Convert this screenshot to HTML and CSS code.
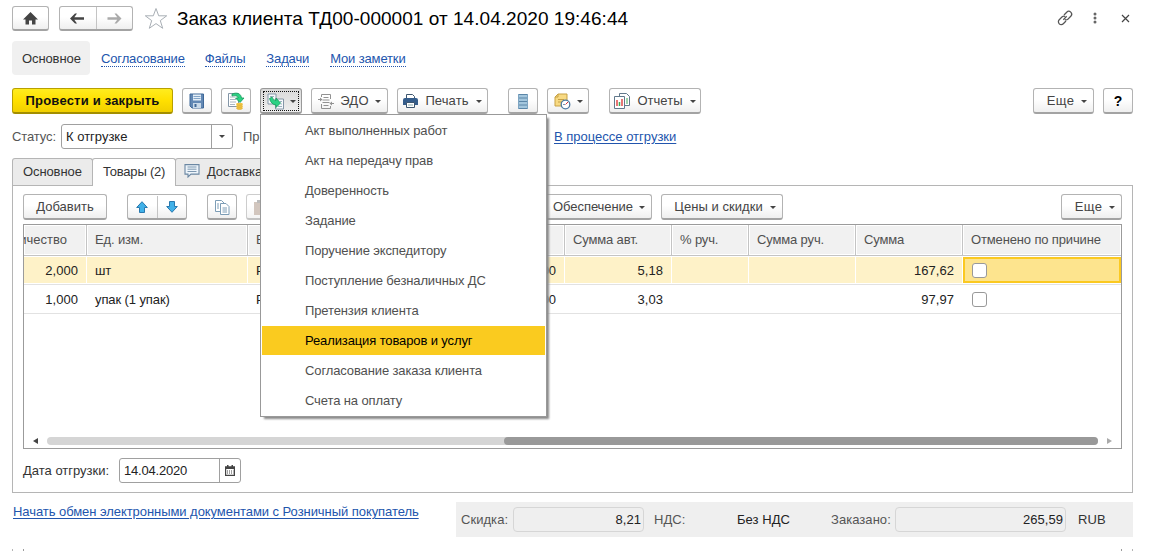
FILE: index.html
```html
<!DOCTYPE html>
<html lang="ru">
<head>
<meta charset="utf-8">
<title>Заказ клиента</title>
<link rel="stylesheet" href="styles.css">
</head>
<body>
<div class="window">
  <header class="titlebar">
    <button class="btn home"><svg width="15" height="13" viewBox="0 0 15 13"><path d="M7.500 0 15 7.500h-2.500V12.500H9V8.500H6v4H2.500V7.500H0z" fill="#444"/></svg></button>
    <div class="btn-group nav">
      <button class="part"><svg width="15" height="11" viewBox="0 0 15 11"><path d="M5 .5 0 5.500l5 5h2L4.300 6.700H14V4.300H4.300L7 .5z" fill="#444"/></svg></button>
      <button class="part"><svg width="15" height="11" viewBox="0 0 15 11"><path d="M9.500.5l5 5-5 5h-2l2.700-3.800H.5V4.300h9.700L7.500.5z" fill="#aaa"/></svg></button>
    </div>
    <svg class="star" width="24" height="23" viewBox="0 0 24 23"><path d="M12 1.500l2.700 7.300h8l-6.400 4.800 2.400 7.700-6.700-4.700-6.700 4.700 2.400-7.700L1.300 8.800h8z" fill="#fff" stroke="#a9afb5"/></svg>
    <h1 class="title">Заказ клиента ТД00-000001 от 14.04.2020 19:46:44</h1>
    <div class="window-tools">
      <svg width="16" height="16" viewBox="0 0 16 16" fill="none" stroke="#555" stroke-width="1.250"><path d="M7 5 9.700 2.200a2.800 2.800 0 0 1 4.100 4L10.800 9.200Q9.300 10.400 7.800 9.400"/><path d="M9 11 6.300 13.800a2.800 2.800 0 0 1-4.100-4L5.200 6.800Q6.700 5.600 8.200 6.600"/><path d="M6.300 9.700l3.400-3.400"/></svg>
      <svg width="4" height="12" viewBox="0 0 4 12" fill="#666"><circle cx="2" cy="2" r="1.500"/><circle cx="2" cy="6" r="1.500"/><circle cx="2" cy="10" r="1.500"/></svg>
      <svg class="close" width="9" height="9" viewBox="0 0 9 9" stroke="#444" stroke-width="1.200"><path d="M1 1l7 7M8 1 1 8"/></svg>
    </div>
  </header>

  <nav class="sections">
    <span class="section-active">Основное</span>
    <a class="s1">Согласование</a><a class="s2">Файлы</a><a class="s3">Задачи</a><a class="s4">Мои заметки</a>
  </nav>

  <div class="commands">
    <button class="btn primary">Провести и закрыть</button>
    <button class="btn icon"><svg width="16" height="16" viewBox="0 0 16 16"><path d="M1 1h13.500v14H3l-2-2z" fill="#6288b4" stroke="#3f6898"/><path d="M4 1.500h8v6H4z" fill="#e4eef7"/><path d="M4.500 3.500h7M4.500 5.500h7" stroke="#83a5c8"/><path d="M4 10h8v5H4z" fill="#c9d9e8"/><path d="M5.500 11h2v3h-2z" fill="#3f6898"/></svg></button>
    <button class="btn icon"><svg width="18" height="18" viewBox="0 0 18 18"><path d="M1.500 1.500h10v13h-10z" fill="#fff" stroke="#8496a7"/><path d="M3 5h5M3 7.500h6M3 10h6M3 12.500h5" stroke="#aab6c2"/><path d="M5 2c5-2 9-.5 9.500 4H17l-4 4.500L8.500 6h2.700C11 4 8 3 5 4z" fill="#2bd184" stroke="#169a5a" stroke-width=".8"/><path d="M9.500 11v5.500c1 1.300 5 1.300 6 0V11z" fill="#f3c545"/><path d="M9.500 12.500c1 1 5 1 6 0m-6 2c1 1 5 1 6 0m-6 2c1 1 5 1 6 0" stroke="#dcae34" fill="none" stroke-width=".8"/></svg></button>
    <div class="dropdown-anchor">
      <button class="btn pressed"><svg width="18" height="17" viewBox="0 0 18 17"><path d="M1 1h8v10H1z" fill="#f7fafc" stroke="#8496a7"/><path d="M8.500 6h8v10h-8z" fill="#f7fafc" stroke="#8496a7"/><path d="M3 3.500h4M13 8.500h2M13.500 11H15M11 13.500h4" stroke="#9cafbf"/><path d="M2.500 5.500 5 4q1 3.500 4 3.500V5l4.500 5L9 14.500V12Q4 11.500 2.500 5.500z" fill="#2bd184" stroke="#169a5a" stroke-width=".8"/></svg><i class="caret"></i></button>
      <ul class="menu">
        <li>Акт выполненных работ</li>
        <li>Акт на передачу прав</li>
        <li>Доверенность</li>
        <li>Задание</li>
        <li>Поручение экспедитору</li>
        <li>Поступление безналичных ДС</li>
        <li>Претензия клиента</li>
        <li class="current">Реализация товаров и услуг</li>
        <li>Согласование заказа клиента</li>
        <li>Счета на оплату</li>
      </ul>
    </div>
    <button class="btn edo"><svg width="16" height="15" viewBox="0 0 16 15" fill="none" stroke="#929292"><path d="M3.500 3V.5h9V5M3.500 10v4.500h9V12M5.500 3.500h5M4.500 6h7M4.500 8.500h7M5.500 11.500h5"/><path d="M0 5.500h2M16 9.500h-2"/><path d="M2 3.500v4l2.500-2zM14 7.500v4l-2.500-2z" fill="#929292" stroke="none"/></svg><span>ЭДО</span><i class="caret"></i></button>
    <button class="btn print"><svg width="15" height="14" viewBox="0 0 15 14"><path d="M3.500 5V.5h6l2 2V5" fill="#fff" stroke="#3d566f"/><path d="M0 6q0-2 2-2h11q2 0 2 2v5h-3V9H3v2H0z" fill="#355d8b"/><path d="M3.500 8.500h8v5h-8z" fill="#fff" stroke="#3d566f"/><path d="M5 11h5" stroke="#8aa"/></svg><span>Печать</span><i class="caret"></i></button>
    <button class="btn icon list"><svg width="10" height="15" viewBox="0 0 10 15"><path d="M0 0h10v15H0z" fill="#a3c6dd"/><path d="M0 .5h10M0 4h10M0 7.500h10M0 11h10M0 14.500h10" stroke="#5b86a8"/><path d="M.5 0v15M9.500 0v15" stroke="#7ea5c2"/></svg></button>
    <button class="btn sched"><svg width="17" height="17" viewBox="0 0 17 17"><path d="M4 1h9v12H1V4z" fill="#f8da83" stroke="#c7a145"/><path d="M1 4h3V1M4 6.500h6M4 9h4" fill="none" stroke="#c7a145"/><circle cx="11.500" cy="11.500" r="4.300" fill="#fff" stroke="#4f7aa2" stroke-width="1.300"/><path d="M11.500 11.500 14 9" stroke="#d33"/><path d="M9 11.500h2" stroke="#7899b3"/></svg><i class="caret"></i></button>
    <button class="btn reports"><svg width="16" height="16" viewBox="0 0 16 16"><path d="M5.500.5h7l3 3v9h-10z" fill="#fff" stroke="#62798c"/><path d="M.5 3.500h10v12H.5z" fill="#fff" stroke="#62798c"/><path d="M3 7v6" stroke="#e04848" stroke-width="1.500"/><path d="M5.500 9v4" stroke="#3baa54" stroke-width="1.500"/><path d="M8 6v7" stroke="#e04848" stroke-width="1.500"/><path d="M13 5v6" stroke="#3baa54"/></svg><span>Отчеты</span><i class="caret"></i></button>
    <button class="btn more end"><span>Еще</span><i class="caret"></i></button>
    <button class="btn help">?</button>
  </div>

  <div class="status-row">
    <label class="status-label">Статус:</label>
    <div class="field status"><span>К отгрузке</span><b><i class="caret small"></i></b></div>
    <span class="priority">Пр</span>
    <a class="state-link">В процессе отгрузки</a>
  </div>

  <div class="tabs">
    <div class="tab t1">Основное</div>
    <div class="tab t2 selected">Товары (2)</div>
    <div class="tab t3"><svg width="16" height="14" viewBox="0 0 16 14"><path d="M1 .6h14v9.500H7L4 13v-2.900H1z" fill="#edf4fa" stroke="#6b87a3" stroke-width="1.100"/><path d="M3.500 3h9M3.500 5.200h9M3.500 7.500h9" stroke="#7c97b0"/></svg><span>Доставка</span></div>
  </div>

  <section class="panel">
    <div class="table-tools">
      <button class="btn add">Добавить</button>
      <div class="btn-group move">
        <button class="part"><svg width="12" height="12" viewBox="0 0 12 12"><path d="M6 .7l5.300 5.800H8.500v5h-5v-5H.7z" fill="#41b1e8" stroke="#2878ae"/></svg></button>
        <button class="part"><svg width="12" height="12" viewBox="0 0 12 12"><path d="M6 11.300.7 5.500h2.800v-5h5v5h2.800z" fill="#41b1e8" stroke="#2878ae"/></svg></button>
      </div>
      <button class="btn icon"><svg width="15" height="15" viewBox="0 0 15 15" fill="#fff" stroke="#7c9db6"><path d="M.5.5h6l3 3v8h-9z"/><path d="M5.500 3.500h5.500l3 3v8H5.500z"/><path d="M2 4h2M2 6h2M2 8h2M7.500 8h4.500M7.500 10h4.500M7.500 12h4.500"/></svg></button>
      <button class="btn icon paste"><svg width="15" height="15" viewBox="0 0 15 15"><path d="M0 2h12v13H0z" fill="#bba99c"/><path d="M3 0h6v3H3z" fill="#999"/><path d="M6 6h8v9H6z" fill="#eee"/></svg></button>
      <button class="btn supply"><span>Обеспечение</span><i class="caret"></i></button>
      <button class="btn prices"><span>Цены и скидки</span><i class="caret"></i></button>
      <button class="btn more end"><span>Еще</span><i class="caret"></i></button>
    </div>

    <div class="grid">
      <div class="row head">
        <div class="qty"><span>Количество</span></div><div>Ед. изм.</div><div>Вид цены</div><div>Сумма авт.</div><div>% руч.</div><div>Сумма руч.</div><div>Сумма</div><div>Отменено по причине</div>
      </div>
      <div class="row active">
        <div class="num">2,000</div><div>шт</div><div class="split"><span>Розничная</span><span>0,00</span></div><div class="num sum">5,18</div><div></div><div></div><div class="num">167,62</div><div class="focus"><i class="check"></i></div>
      </div>
      <div class="row">
        <div class="num">1,000</div><div>упак (1 упак)</div><div class="split"><span>Розничная</span><span>0,00</span></div><div class="num sum">3,03</div><div></div><div></div><div class="num">97,97</div><div class="mark"><i class="check"></i></div>
      </div>
      <div class="scroll">
        <svg width="5" height="8" viewBox="0 0 5 8"><path d="M5 1v6L0 4z" fill="#444"/></svg>
        <div class="track"><div class="thumb"></div></div>
        <svg width="5" height="8" viewBox="0 0 5 8"><path d="M0 1v6l5-3z" fill="#aaa"/></svg>
      </div>
    </div>

    <div class="date-row">
      <label>Дата отгрузки:</label>
      <div class="field date"><span>14.04.2020</span><b><svg width="10" height="11" viewBox="0 0 10 11"><path d="M.6 2h8.800v8.400H.6z" fill="#fff" stroke="#444" stroke-width="1.200"/><path d="M0 1.500h10V4H0zM2 0h1.500v2H2zM6.500 0H8v2H6.500z" fill="#444"/><path d="M2 6h6.500M2 8h6.500" stroke="#444" stroke-dasharray="1 1"/></svg></b></div>
    </div>
  </section>

  <footer class="footer">
    <a class="edi">Начать обмен электронными документами с Розничный покупатель</a>
    <div class="totals">
      <label class="l1">Скидка:</label><div class="ro r1">8,21</div>
      <label class="l2">НДС:</label><span class="novat">Без НДС</span>
      <label class="l3">Заказано:</label><div class="ro r2">265,59</div>
      <span class="cur">RUB</span>
    </div>
  </footer>
  <div class="next-edge"><div></div></div>
</div>
</body>
</html>
```
FILE: styles.css
```css
* { box-sizing: border-box; }
body { margin: 0; background: #fff; overflow: hidden; font: 13px/16px "Liberation Sans", Arial, sans-serif; color: #444; letter-spacing: -.1px; }
.window { width: 1152px; height: 551px; padding: 6px 19px 0 12px; overflow: hidden; }
button { font: inherit; letter-spacing: inherit; color: inherit; margin: 0; padding: 0; }
svg { display: block; flex: none; }
.btn, .btn-group { display: flex; align-items: center; justify-content: center; flex: none; height: 26px; border: 1px solid #b3b3b3; border-bottom: 2px solid #a3a3a3; border-radius: 3px; background: linear-gradient(#fff 45%, #efefef); }
.btn { padding-top: 1px; letter-spacing: 0; white-space: nowrap; }
.btn-group { align-items: stretch; }
.part { display: flex; flex: 1; align-items: center; justify-content: center; border: 0; background: none; }
.part + .part { border-left: 1px solid #c4c4c4; }
.caret { flex: none; width: 0; height: 0; margin-top: 1px; border: 3px solid transparent; border-top-color: #444; border-bottom: 0; }
.caret.small { border-width: 3px 3px 0; margin: 0; }
.end { margin-left: auto; }

.titlebar { display: flex; height: 25px; align-items: center; }
.home { width: 37px; height: 25px; padding: 0; }
.nav { width: 74px; height: 25px; margin-left: 10px; }
.star { margin-left: 11px; }
.title { margin: 0 0 0 9px; font-size: 19px; font-weight: 400; line-height: 25px; color: #000; letter-spacing: .04px; white-space: nowrap; }
.window-tools { display: flex; align-items: center; gap: 20px; margin: -1px 3px 0 auto; }
.close { margin-left: 4px; }

.sections { display: flex; align-items: center; height: 34px; margin-top: 10px; }
.section-active { width: 78px; line-height: 35px; height: 34px; padding-left: 10px; border-radius: 4px; background: #f0f0f0; color: #333; }
.sections a { line-height: 14px; margin-top: 2px; border-bottom: 1px dotted #2255ad; color: #2255ad; letter-spacing: -.14px; white-space: nowrap; }
.sections .s1 { margin-left: 11px; }
.sections .s2 { margin-left: 20px; }
.sections .s3 { margin-left: 21px; }
.sections .s4 { margin-left: 21px; }

.commands { display: flex; gap: 9px; height: 27px; margin-top: 13px; }
.primary { width: 161px; border-color: #b8a000 #b8a000 #a38e00; background: linear-gradient(#ffec1f, #ffe000 50%, #f1cf00); color: #111; font-weight: 700; letter-spacing: .2px; }
.icon { width: 30px; }
.dropdown-anchor { position: relative; }
.pressed { width: 42px; gap: 5px; border-color: #999; background: linear-gradient(#d9d9d9, #efefef); outline: 1px dotted #111; outline-offset: -4px; }
.edo { width: 77px; gap: 6px; letter-spacing: .3px; }
.print { width: 91px; gap: 7px; letter-spacing: .1px; }
.list { margin-left: 11px; }
.sched { width: 42px; gap: 6px; }
.reports { width: 92px; margin-left: 11px; gap: 7px; letter-spacing: .05px; }
.more { width: 61px; gap: 7px; padding-left: 7px; letter-spacing: .3px; }
.help { width: 30px; color: #000; font-size: 14px; font-weight: 700; }

.menu { position: absolute; z-index: 5; top: 26px; left: 0; width: 287px; height: 303px; margin: 0; padding: 1px; list-style: none; border: 1px solid #999; background: #fff; box-shadow: 3px 3px 2px -1px #8a8a8a; letter-spacing: -.12px; }
.menu li { height: 30px; padding-left: 43px; line-height: 30px; color: #505050; white-space: nowrap; }
.menu .current { height: 29px; margin-bottom: 1px; background: #facb1f; color: #000; }

.status-row { display: flex; align-items: center; height: 25px; margin-top: 9px; color: #555; }
.status-label { width: 49px; }
.field { display: flex; height: 25px; border: 1px solid #a0a0a0; border-radius: 3px; background: #fff; color: #222; line-height: 23px; letter-spacing: 0; }
.field span { flex: 1; padding-left: 4px; }
.field b { display: flex; width: 21px; align-items: center; justify-content: center; border-left: 1px solid #a0a0a0; }
.status { width: 172px; }
.priority { width: 321px; padding-left: 10px; }
.state-link { color: #2255ad; letter-spacing: 0; text-decoration: underline; text-underline-offset: 2px; white-space: nowrap; }

.tabs { display: flex; height: 28px; margin-top: 9px; color: #333; position: relative; }
.tab { height: 27px; line-height: 26px; border: 1px solid #b5b5b5; border-bottom: 0; border-radius: 3px 3px 0 0; background: #ebebeb; }
.t1 { width: 81px; padding-left: 10px; }
.t2 { width: 84px; margin-left: -1px; padding-left: 10px; height: 28px; background: #fff; letter-spacing: -.2px; }
.t3 { display: flex; width: 120px; margin-left: -1px; padding: 5px 0 0 8px; gap: 7px; line-height: 16px; }

.panel { height: 308px; margin-top: -1px; padding: 8px 10px 0; border: 1px solid #b5b5b5; }
.table-tools { display: flex; height: 26px; }
.add { width: 84px; }
.move { width: 60px; margin: 0 20px; padding-top: 1px; }
.paste { margin-left: 9px; opacity: .65; }
.supply { width: 113px; margin-left: 263px; padding-left: 7px; gap: 6px; letter-spacing: -.07px; }
.prices { width: 122px; margin-left: 9px; padding-left: 6px; gap: 7px; letter-spacing: .05px; }
.grid { display: flex; flex-direction: column; height: 225px; margin-top: 4px; border: 1px solid #9b9b9b; overflow: hidden; }
.row { display: grid; grid-template-columns: 63px 161px 317px 107px 77px 107px 107px 158px; height: 29px; line-height: 29px; border-bottom: 1px solid #e2e2e2; color: #222; }
.row > div { padding: 0 8px; border-right: 1px solid transparent; white-space: nowrap; overflow: hidden; }
.row > div:last-child { border-right: 0; }
.head { height: 31px; line-height: 29px; border-bottom: 1px solid #c4c4c4; color: #505050; }
.head > div { border-right-color: #c4c4c4; background: #f1f1f1; box-shadow: inset 1px 1px #fff, inset -1px -1px #fff; letter-spacing: -.14px; }
.row > .qty { display: flex; justify-content: flex-end; padding-right: 19px; letter-spacing: 0; }
.row.active { height: 29px; padding: 1px 0; line-height: 27px; background: #fef2c8; background-clip: content-box; }
.active > div { border-right-color: #fff; }
.row > .num { text-align: right; padding-right: 8px; letter-spacing: .05px; }
.row > .sum { padding-right: 8px; }
.split { display: flex; justify-content: space-between; }
.row > .focus { border: 2px solid #fbc921; background: #fde48e; padding-left: 7px; line-height: 22px; }
.row > .focus:last-child { border-right: 2px solid #fbc921; }
.row > .mark { padding-left: 9px; line-height: 27px; }
.check { display: inline-block; width: 15px; height: 15px; border: 1px solid #999; border-radius: 3px; background: #fff; vertical-align: middle; }
.scroll { display: flex; align-items: center; height: 8px; margin: auto 9px 3px; }
.track { width: 1051px; height: 8px; margin: 0 9px; border-radius: 4px; background: #d5d5d5; }
.thumb { width: 594px; height: 8px; margin-left: auto; border-radius: 4px; background: #999; }
.date-row { display: flex; align-items: center; margin-top: 9px; color: #333; letter-spacing: 0; }
.date-row label { width: 96px; }
.date { width: 122px; }
.date span { letter-spacing: -.2px; }

.footer { display: flex; height: 35px; margin-top: 9px; }
.edi { width: 444px; padding-left: 1px; line-height: 20px; color: #2255ad; letter-spacing: -.06px; text-decoration: underline; text-underline-offset: 2px; white-space: nowrap; }
.totals { display: flex; flex: 1; align-items: center; background: #efefef; color: #555; letter-spacing: .05px; }
.ro { height: 25px; padding-right: 2px; border: 1px solid #d6d6d6; border-radius: 4px; line-height: 24px; text-align: right; color: #222; }
.l1 { width: 57px; padding-left: 5px; }
.r1 { width: 131px; }
.l2 { width: 93px; padding-left: 10px; }
.novat { width: 94px; color: #222; }
.l2, .novat { padding-top: 1px; }
.l3 { width: 64px; }
.r2 { width: 171px; }
.cur { margin-left: 12px; color: #333; }
.next-edge { height: 2px; margin-top: 12px; padding: 0 10px; border: solid #b5b5b5; border-width: 0 1px; }
.next-edge div { height: 2px; border: solid #9b9b9b; border-width: 0 1px; }
```
